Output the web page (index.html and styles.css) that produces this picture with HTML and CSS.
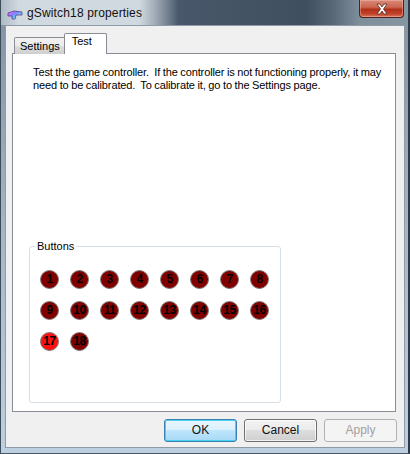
FILE: index.html
```html
<!DOCTYPE html>
<html>
<head>
<meta charset="utf-8">
<link rel="stylesheet" href="styles.css">
</head>
<body>
<div class="window">
  <div class="titlebar">
    <div class="title-glow">
      <svg class="app-icon" width="16" height="12" viewBox="0 0 16 12">
        <defs>
          <linearGradient id="ig" x1="0" y1="0" x2="1" y2="1">
            <stop offset="0" stop-color="#ff70ff"/>
            <stop offset="0.4" stop-color="#8080ff"/>
            <stop offset="0.7" stop-color="#60e0ff"/>
            <stop offset="1" stop-color="#ffff60"/>
          </linearGradient>
        </defs>
        <path d="M1 4 L7 2 L15 3 L15 6 L9 6 L8 10 L5 10 L5 7 L1 7 Z" fill="url(#ig)" stroke="#5a3a8a" stroke-width="0.8"/>
      </svg>
      <span class="title">gSwitch18 properties</span>
    </div>
    <div class="close-btn">
      <svg width="14" height="12" viewBox="0 0 14 12">
        <path d="M2 1 L5 1 L7 4 L9 1 L12 1 L8.5 6 L12 11 L9 11 L7 8 L5 11 L2 11 L5.5 6 Z" fill="#fff" stroke="#5a2a20" stroke-width="0.8" stroke-linejoin="round"/>
      </svg>
    </div>
  </div>
  <div class="client">
    <div class="tabs">
      <div class="tab">Settings</div>
      <div class="tab active">Test</div>
    </div>
    <div class="panel">
      <p class="intro">Test the game controller.&nbsp; If the controller is not functioning properly, it may<br>need to be calibrated.&nbsp; To calibrate it, go to the Settings page.</p>
      <fieldset class="group">
        <legend>Buttons</legend>
        <div class="grid">
          <div class="btn-dot">1</div>
          <div class="btn-dot">2</div>
          <div class="btn-dot">3</div>
          <div class="btn-dot">4</div>
          <div class="btn-dot">5</div>
          <div class="btn-dot">6</div>
          <div class="btn-dot">7</div>
          <div class="btn-dot">8</div>
          <div class="btn-dot">9</div>
          <div class="btn-dot">10</div>
          <div class="btn-dot">11</div>
          <div class="btn-dot">12</div>
          <div class="btn-dot">13</div>
          <div class="btn-dot">14</div>
          <div class="btn-dot">15</div>
          <div class="btn-dot">16</div>
          <div class="btn-dot on">17</div>
          <div class="btn-dot">18</div>
        </div>
      </fieldset>
    </div>
    <div class="actions">
      <div class="pbtn default">OK</div>
      <div class="pbtn">Cancel</div>
      <div class="pbtn disabled">Apply</div>
    </div>
  </div>
</div>
</body>
</html>
```
FILE: styles.css
```css
html, body {
  margin: 0;
  padding: 0;
}
body {
  width: 410px;
  height: 454px;
  overflow: hidden;
  background: #556677;
  font-family: "Liberation Sans", Arial, sans-serif;
}
.window {
  width: 410px;
  height: 454px;
  display: flex;
  flex-direction: column;
  background: linear-gradient(to bottom, #7f91a2 0%, #a4b6c6 50%, #bdd0e2 100%);
  border-left: 1px solid #3e4c58;
  border-right: 2px solid #2e3a46;
  border-bottom: 1px solid #4a5866;
  box-sizing: border-box;
}
.titlebar {
  height: 25px;
  flex: none;
  display: flex;
  align-items: flex-start;
  background: linear-gradient(to right, #7d8e9d 0%, #6a7b8a 32%, #48586a 44%, #404f5f 75%, #5a6a79 82%, #7e8e9b 88%, #8595a2 100%);
}
.title-glow {
  display: flex;
  align-items: flex-start;
  height: 25px;
  padding-right: 36px;
  background: linear-gradient(to right, rgba(205,214,222,0.6) 0%, rgba(214,222,228,0.95) 10%, rgba(214,222,228,0.95) 78%, rgba(214,222,228,0) 100%);
}
.app-icon {
  margin: 9px 0 0 6px;
  flex: none;
}
.title {
  margin: 5px 0 0 4px;
  font-size: 12px;
  line-height: 16px;
  color: #111;
  letter-spacing: 0.15px;
}
.close-btn {
  margin-left: auto;
  margin-right: 4px;
  width: 43px;
  height: 17px;
  border: 1px solid #4a2420;
  border-top: none;
  border-radius: 0 0 4px 4px;
  background: linear-gradient(to bottom, #d98a78 0%, #cc6650 42%, #b0301a 56%, #c0402a 80%, #d87658 100%);
  box-shadow: inset 0 0 0 1px rgba(255,200,190,0.4);
  display: flex;
  align-items: center;
  justify-content: center;
}
.client {
  margin: 0 3px 5px 4px;
  flex: 1;
  background: #f0f0f0;
  border: 1px solid #8e9ba7;
  display: flex;
  flex-direction: column;
  padding: 7px 0 0 6px;
  box-sizing: border-box;
}
.tabs {
  display: flex;
  align-items: flex-end;
  height: 21px;
  padding-left: 2px;
  position: relative;
  z-index: 1;
  margin-bottom: -1px;
}
.tab {
  height: 16px;
  padding: 0 5px;
  border: 1px solid #898c95;
  border-bottom: none;
  background: linear-gradient(to bottom, #f2f2f2 0%, #ebebeb 50%, #dddddd 51%, #cfcfcf 100%);
  font-size: 11px;
  line-height: 17px;
  color: #000;
  border-radius: 2px 2px 0 0;
}
.tab.active {
  height: 20px;
  padding: 0 14px 0 7px;
  background: #fff;
  line-height: 15px;
  margin-left: -2px;
}
.panel {
  width: 384px;
  height: 359px;
  box-sizing: border-box;
  background: #fff;
  border: 1px solid #898c95;
  padding: 12px 0 0 16px;
}
.intro {
  margin: 0 0 0 4px;
  font-size: 11px;
  line-height: 13px;
  color: #000;
  letter-spacing: -0.12px;
  word-spacing: -0.3px;
}
.group {
  margin: 148px 0 0 0;
  padding: 0 0 0 10px;
  width: 251px;
  height: 163px;
  box-sizing: border-box;
  border: 1px solid #d5dfe5;
  border-radius: 3px;
}
.group legend {
  margin-left: -5px;
  padding: 0 2px;
  font-size: 11px;
  line-height: 13px;
  color: #000;
}
.grid {
  display: grid;
  grid-template-columns: repeat(8, 30px);
  grid-auto-rows: 31px;
  padding-top: 17px;
}
.btn-dot {
  width: 19px;
  height: 19px;
  box-sizing: border-box;
  border-radius: 50%;
  border: 1px solid #7d7d7d;
  background: #800000;
  color: #000;
  font-weight: bold;
  font-size: 12px;
  line-height: 17px;
  text-align: center;
  letter-spacing: -0.5px;
}
.btn-dot.on {
  background: #ff1010;
}
.actions {
  display: flex;
  justify-content: flex-end;
  gap: 7px;
  padding: 7px 7px 0 0;
}
.pbtn {
  width: 73px;
  height: 23px;
  box-sizing: border-box;
  border: 1px solid #707070;
  border-radius: 3px;
  background: linear-gradient(to bottom, #f2f2f2 0%, #ebebeb 49%, #dddddd 50%, #cfcfcf 100%);
  box-shadow: inset 0 0 0 1px rgba(255,255,255,0.7);
  font-size: 12px;
  line-height: 21px;
  text-align: center;
  color: #111;
}
.pbtn.default {
  border-color: #3c7fb1;
  background: linear-gradient(to bottom, #eaf6fd 0%, #d9f0fc 49%, #bee6fd 50%, #a7d9f5 100%);
  box-shadow: inset 0 0 0 1px #48d0f0;
}
.pbtn.disabled {
  border-color: #adb2b5;
  background: #f4f4f4;
  box-shadow: none;
  color: #a0a0a0;
}
```
